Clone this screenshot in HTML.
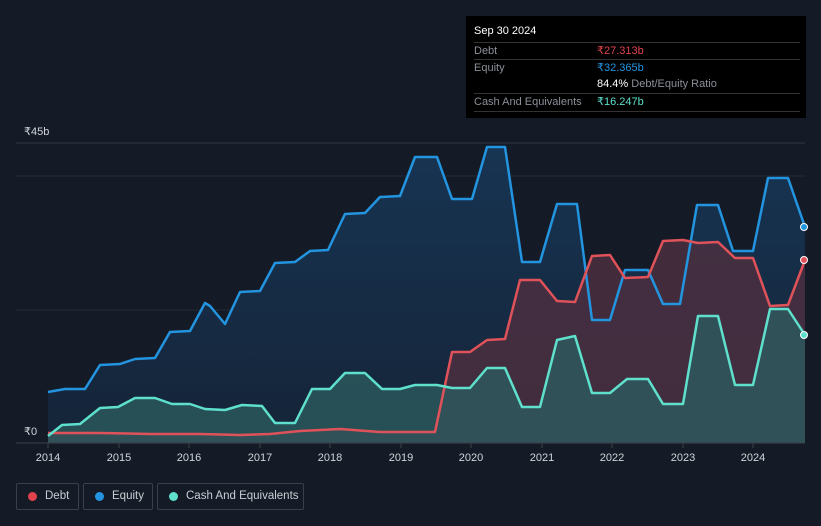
<!DOCTYPE html>
<html><head><meta charset="utf-8"><style>
html,body{margin:0;width:821px;height:526px;overflow:hidden}
body{background:#151b26;font-family:"Liberation Sans",sans-serif;position:relative}
.tt{position:absolute;left:466px;top:16px;width:340px;height:102px;background:#000;color:#ddd;font-size:11px}
.tt .h{position:absolute;left:8px;top:9px;color:#fff;font-size:11px}
.row{position:absolute;left:8px;width:326px;border-top:1px solid #333;height:17px;line-height:17px;color:#8a8f98;white-space:nowrap}
.row span{position:absolute;left:123px}
.leg{position:absolute;top:483px;height:27px;border:1px solid #3a404b;border-radius:2px;color:#c9cdd4;font-size:11.5px;line-height:25px;box-sizing:border-box;white-space:nowrap}
.leg i{position:absolute;left:11px;top:8px;width:9px;height:9px;border-radius:50%}
</style></head><body>
<svg width="821" height="526" style="position:absolute;left:0;top:0">
<defs>
<linearGradient id="eg" x1="0" y1="0" x2="0" y2="1"><stop offset="0" stop-color="#173452"/><stop offset="1" stop-color="#152438"/></linearGradient>
</defs>
<line x1="16" y1="143" x2="805" y2="143" stroke="#2e3542"/>
<line x1="16" y1="176" x2="805" y2="176" stroke="#222a36"/>
<line x1="16" y1="310" x2="805" y2="310" stroke="#222a36"/>
<polygon fill="url(#eg)" points="48,443 48,392 65,389 85,389 100,365 120,364 135,359 155,358 170,332 190,331 205,303 210,306 225,324 240,292 260,291 275,263 295,262 310,251 328,250 345,214 365,213 380,197 400,196 415,157 437,157 452,199 472,199 487,147 505,147 522,262 540,262 557,204 577,204 592,320 610,320 625,270 648,270 663,304 680,304 697,205 718,205 733,251 753,251 768,178 788,178 805,227 805,443"/>
<polygon fill="#4a2f40" fill-opacity="0.85" points="48,443 48,433 100,433 150,434 200,434 240,435 270,434 300,431 340,429 380,432 435,432 452,352 470,352 487,340 505,339 520,280 540,280 557,301 575,302 592,256 610,255 625,278 648,277 663,241 683,240 698,243 718,242 735,258 753,258 770,306 788,305 805,260 805,443"/>
<polygon fill="#2c5a5e" fill-opacity="0.8" points="48,443 48,436 62,425 80,424 100,408 118,407 135,398 155,398 172,404 190,404 205,409 225,410 242,405 262,406 275,423 295,423 312,389 330,389 345,373 365,373 382,389 400,389 415,385 437,385 452,388 470,388 487,368 505,368 522,407 540,407 557,340 575,336 592,393 610,393 627,379 648,379 663,404 683,404 698,316 718,316 735,385 753,385 770,309 788,309 805,335 805,443"/>
<g fill="none" stroke-width="2.5" stroke-linejoin="round">
<polyline stroke="#2394df" points="48,392 65,389 85,389 100,365 120,364 135,359 155,358 170,332 190,331 205,303 210,306 225,324 240,292 260,291 275,263 295,262 310,251 328,250 345,214 365,213 380,197 400,196 415,157 437,157 452,199 472,199 487,147 505,147 522,262 540,262 557,204 577,204 592,320 610,320 625,270 648,270 663,304 680,304 697,205 718,205 733,251 753,251 768,178 788,178 805,227"/>
<polyline stroke="#e0525a" points="48,433 100,433 150,434 200,434 240,435 270,434 300,431 340,429 380,432 435,432 452,352 470,352 487,340 505,339 520,280 540,280 557,301 575,302 592,256 610,255 625,278 648,277 663,241 683,240 698,243 718,242 735,258 753,258 770,306 788,305 805,260"/>
<polyline stroke="#5ee0cc" points="48,436 62,425 80,424 100,408 118,407 135,398 155,398 172,404 190,404 205,409 225,410 242,405 262,406 275,423 295,423 312,389 330,389 345,373 365,373 382,389 400,389 415,385 437,385 452,388 470,388 487,368 505,368 522,407 540,407 557,340 575,336 592,393 610,393 627,379 648,379 663,404 683,404 698,316 718,316 735,385 753,385 770,309 788,309 805,335"/>
</g>
<circle cx="804" cy="227" r="3.5" fill="#2394df" stroke="#fff" stroke-width="1"/>
<circle cx="804" cy="260" r="3.5" fill="#e0525a" stroke="#fff" stroke-width="1"/>
<circle cx="804" cy="335" r="3.5" fill="#5ee0cc" stroke="#fff" stroke-width="1"/>
<line x1="16" y1="443" x2="805" y2="443" stroke="#3a404b"/>
<g stroke="#3a404b"><line x1="48" y1="443" x2="48" y2="448"/><line x1="119" y1="443" x2="119" y2="448"/><line x1="189" y1="443" x2="189" y2="448"/><line x1="260" y1="443" x2="260" y2="448"/><line x1="330" y1="443" x2="330" y2="448"/><line x1="401" y1="443" x2="401" y2="448"/><line x1="471" y1="443" x2="471" y2="448"/><line x1="542" y1="443" x2="542" y2="448"/><line x1="612" y1="443" x2="612" y2="448"/><line x1="683" y1="443" x2="683" y2="448"/><line x1="753" y1="443" x2="753" y2="448"/></g>
<g fill="#d0d4da" font-size="11" text-anchor="middle" font-family="Liberation Sans,sans-serif">
<text x="48" y="461">2014</text><text x="119" y="461">2015</text><text x="189" y="461">2016</text><text x="260" y="461">2017</text><text x="330" y="461">2018</text><text x="401" y="461">2019</text><text x="471" y="461">2020</text><text x="542" y="461">2021</text><text x="612" y="461">2022</text><text x="683" y="461">2023</text><text x="753" y="461">2024</text>
</g>
<text x="24" y="135" fill="#d0d4da" font-size="11" font-family="Liberation Sans,sans-serif">₹45b</text>
<text x="24" y="435" fill="#d0d4da" font-size="11" font-family="Liberation Sans,sans-serif">₹0</text>
</svg>
<div class="tt">
<div class="h">Sep 30 2024</div>
<div class="row" style="top:26px">Debt<span style="color:#e0434c">₹27.313b</span></div>
<div class="row" style="top:43px">Equity<span style="color:#2394df">₹32.365b</span></div>
<div class="row" style="top:60px;border-top:none"><span style="color:#8a8f98"><b style="color:#fff;font-weight:normal">84.4%</b> Debt/Equity Ratio</span></div>
<div class="row" style="top:77px">Cash And Equivalents<span style="color:#5ee0cc">₹16.247b</span></div>
<div class="row" style="top:95px;height:0"></div>
</div>
<div class="leg" style="left:16px;width:63px"><i style="background:#e0434c"></i><span style="position:absolute;left:28px">Debt</span></div>
<div class="leg" style="left:83px;width:70px"><i style="background:#2394df"></i><span style="position:absolute;left:28px">Equity</span></div>
<div class="leg" style="left:157px;width:147px"><i style="background:#5ee0cc"></i><span style="position:absolute;left:28px">Cash And Equivalents</span></div>
</body></html>
